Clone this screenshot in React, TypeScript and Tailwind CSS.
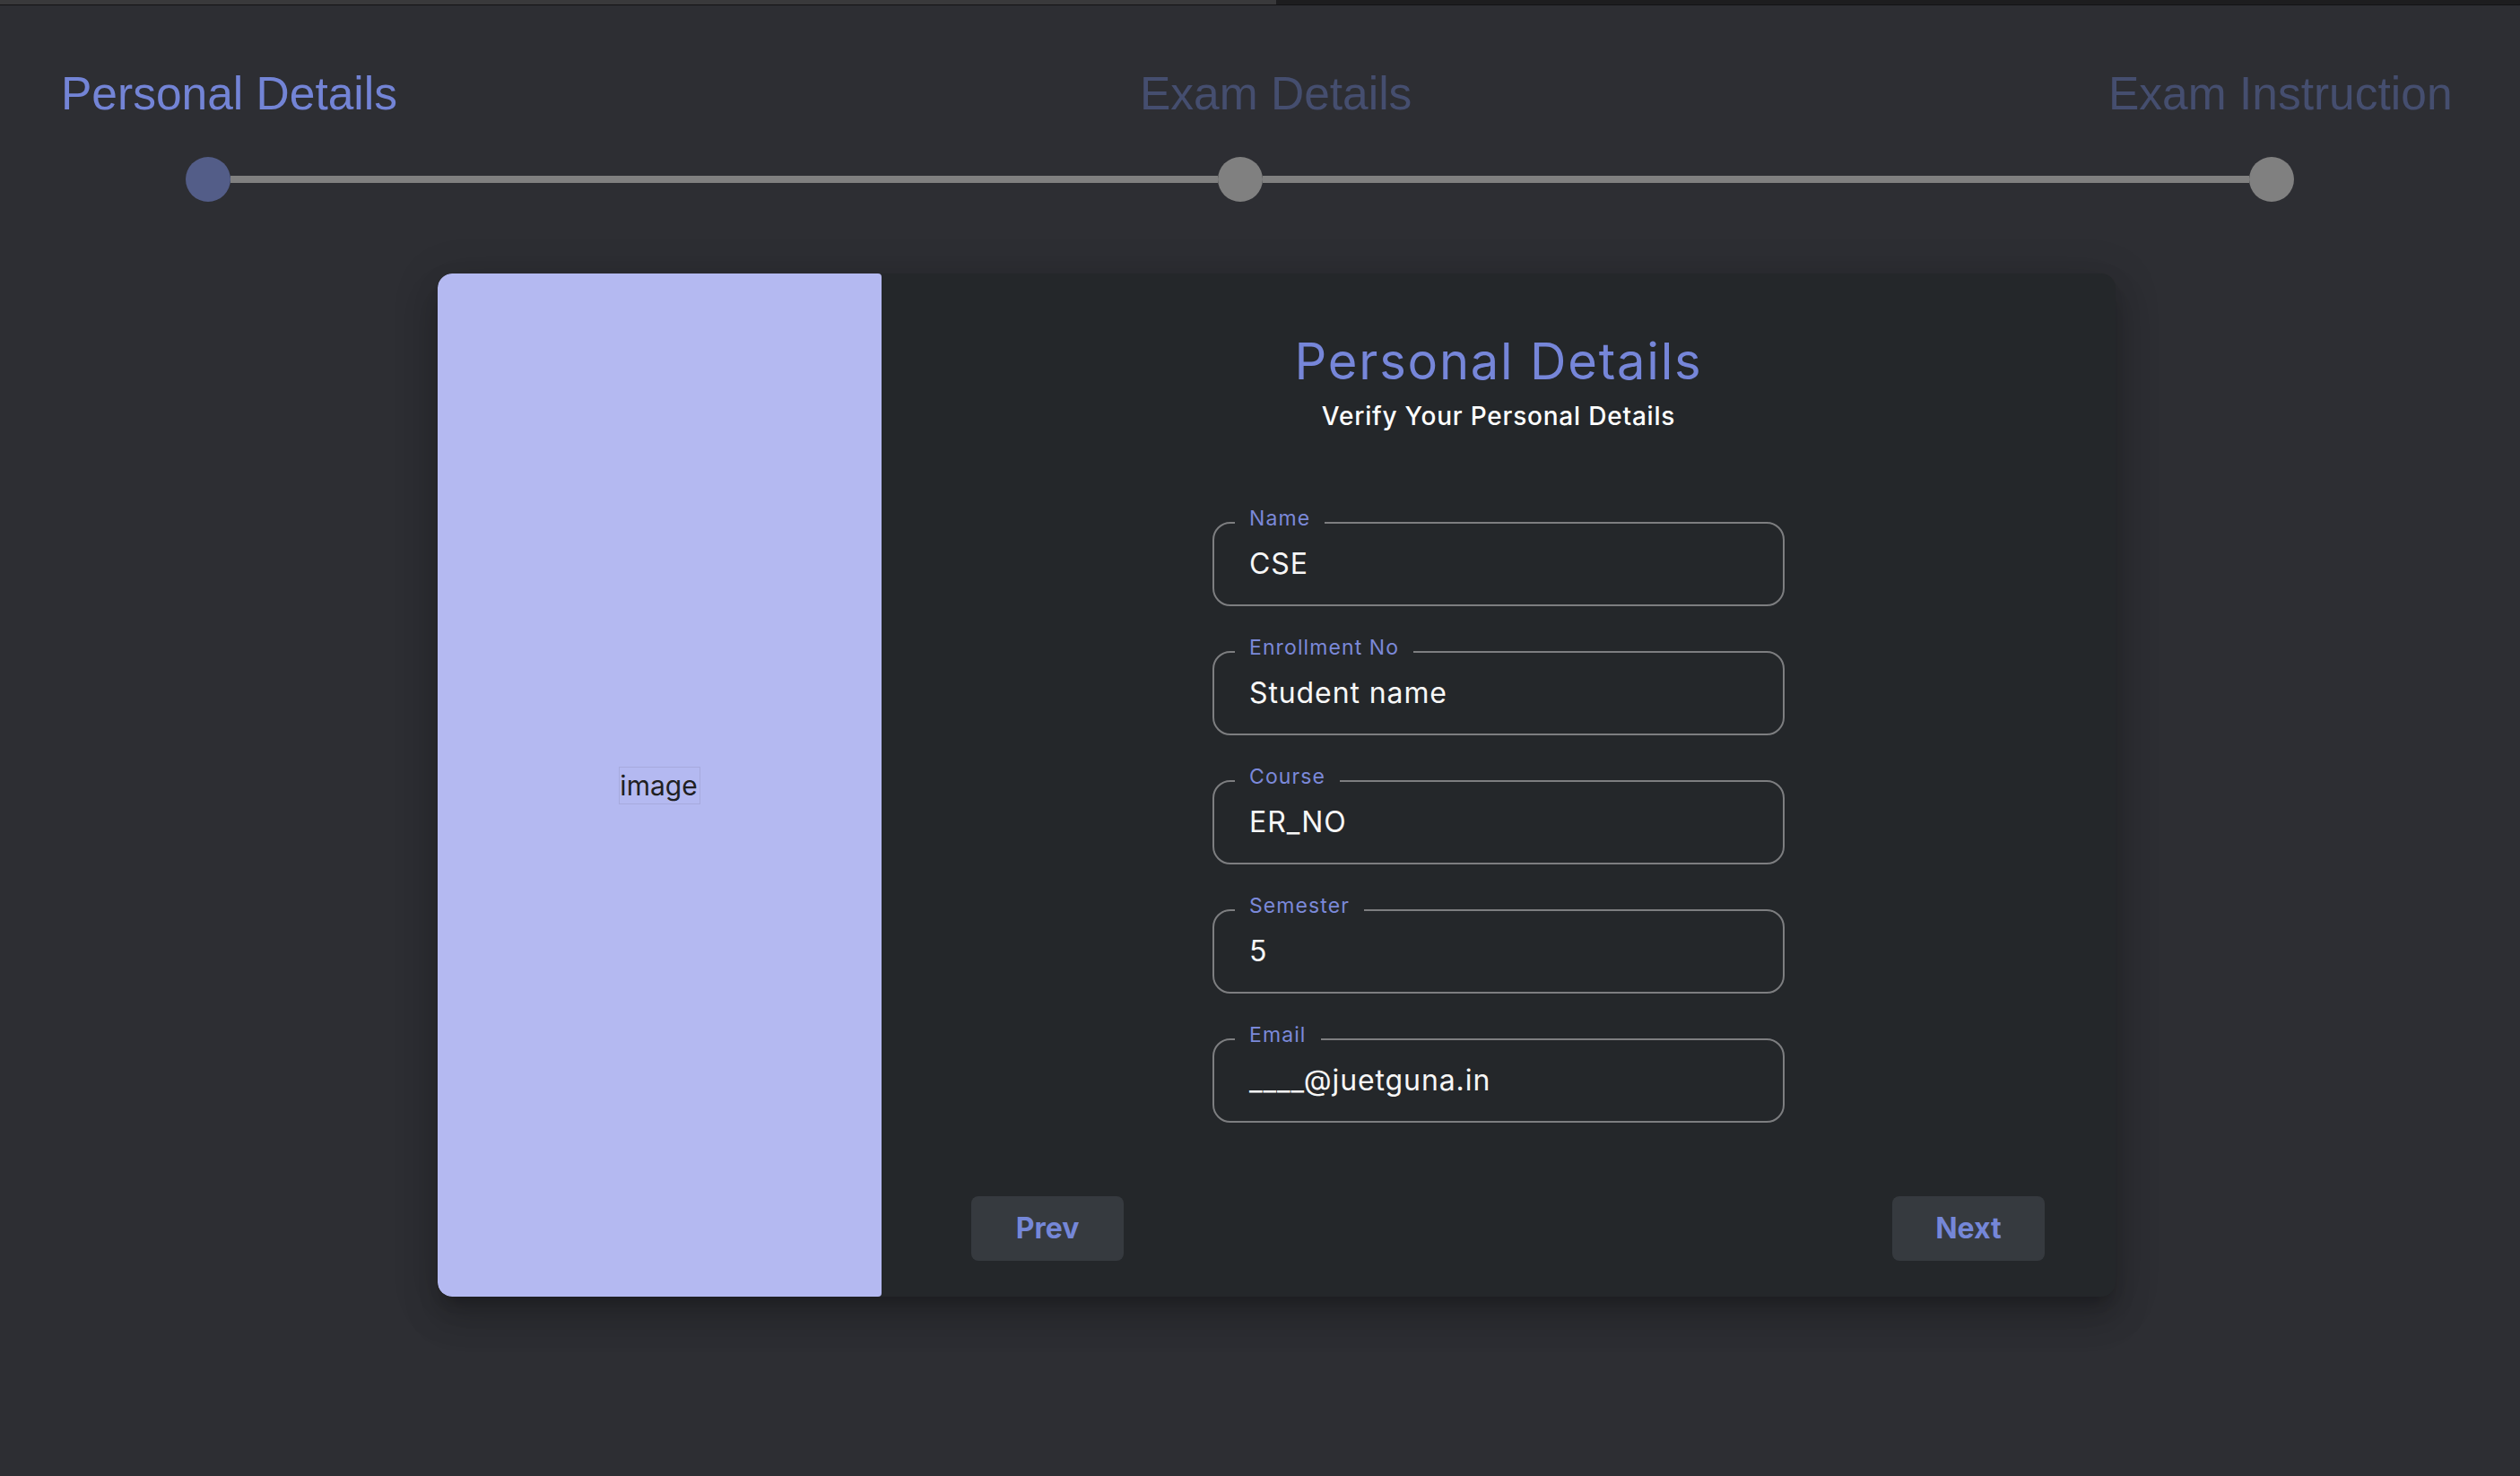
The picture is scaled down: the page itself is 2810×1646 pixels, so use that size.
import React from "react";

const fields = [
  { label: "Name", value: "CSE" },
  { label: "Enrollment No", value: "Student name" },
  { label: "Course", value: "ER_NO" },
  { label: "Semester", value: "5" },
  { label: "Email", value: "____@juetguna.in" },
];

function Field({ label, value }: { label: string; value: string }) {
  return (
    <div className="relative flex h-[94px] w-[638px] items-center rounded-[20px] border-2 border-[#7d7e80] pl-[39px]">
      <span className="absolute left-[23px] top-[-19px] bg-[#24272a] px-4 text-[23px] leading-[26px] tracking-[1.1px] text-[#7b89d9]">
        {label}
      </span>
      <span className="text-[32px] leading-[40px] tracking-[0.9px] text-[#f7f7f7]">{value}</span>
    </div>
  );
}

export default function App() {
  return (
    <div className="min-h-screen w-full bg-[#2d2e33] pb-[200px]" style={{ fontFamily: "Inter, 'Noto Sans', sans-serif" }}>
      {/* top strip */}
      <div className="flex h-[6px] border-b border-[#131315]">
        <div className="w-[1423px] bg-[#39393b]" />
        <div className="flex-1 bg-[#1d1d1f]" />
      </div>

      {/* stepper labels */}
      <div
        className="mt-[72px] grid grid-cols-[1203px_1080px_1fr] pl-[68px] text-[51.5px] leading-[52px]"
        style={{ fontFamily: "'Liberation Sans', Arial, sans-serif" }}
      >
        <div className="text-[#7384d6]">Personal Details</div>
        <div className="text-[#454e6f]">Exam Details</div>
        <div className="text-[#454e6f]">Exam Instruction</div>
      </div>

      {/* stepper track */}
      <div className="mt-[45px] flex h-[50px] items-center pl-[207px] pr-[252px]">
        <div className="h-[50px] w-[50px] shrink-0 rounded-full bg-[#535d88]" />
        <div className="h-[8px] flex-1 bg-[#808080]" />
        <div className="h-[50px] w-[50px] shrink-0 rounded-full bg-[#808080]" />
        <div className="h-[8px] flex-1 bg-[#808080]" />
        <div className="h-[50px] w-[50px] shrink-0 rounded-full bg-[#808080]" />
      </div>

      {/* card */}
      <div className="ml-[488px] mt-[80px] flex h-[1141px] w-[1871px] overflow-hidden rounded-[16px] bg-[#24272a] shadow-[0_24px_38px_3px_rgba(0,0,0,0.14),0_9px_46px_8px_rgba(0,0,0,0.12),0_11px_15px_-7px_rgba(0,0,0,0.2)]">
        <div className="flex w-[495px] shrink-0 items-center justify-center rounded-l-[16px] rounded-r-[4px] bg-[#b4b9f1]">
          <span className="border border-[#a7aadd] pr-[2px] text-[30px] leading-[40px] text-[#1f1f22]">image</span>
        </div>
        <div className="flex flex-1 flex-col">
          <h1 className="mt-[65px] text-center text-[56px] font-normal leading-[67px] tracking-[1.8px] text-[#7686d9]">
            Personal Details
          </h1>
          <p className="mt-[10px] text-center text-[28px] font-medium leading-[34px] tracking-[0.8px] text-white">
            Verify Your Personal Details
          </p>
          <div className="mx-auto mt-[101px] flex flex-col gap-[50px]">
            {fields.map((f) => (
              <Field key={f.label} label={f.label} value={f.value} />
            ))}
          </div>
          <div className="mt-[82px] flex justify-between pl-[100px] pr-[79px]">
            <button className="h-[72px] w-[170px] rounded-[8px] bg-[#363a3f] text-[32px] font-bold text-[#7587d8]">
              Prev
            </button>
            <button className="h-[72px] w-[170px] rounded-[8px] bg-[#363a3f] text-[32px] font-bold text-[#7587d8]">
              Next
            </button>
          </div>
        </div>
      </div>
    </div>
  );
}
